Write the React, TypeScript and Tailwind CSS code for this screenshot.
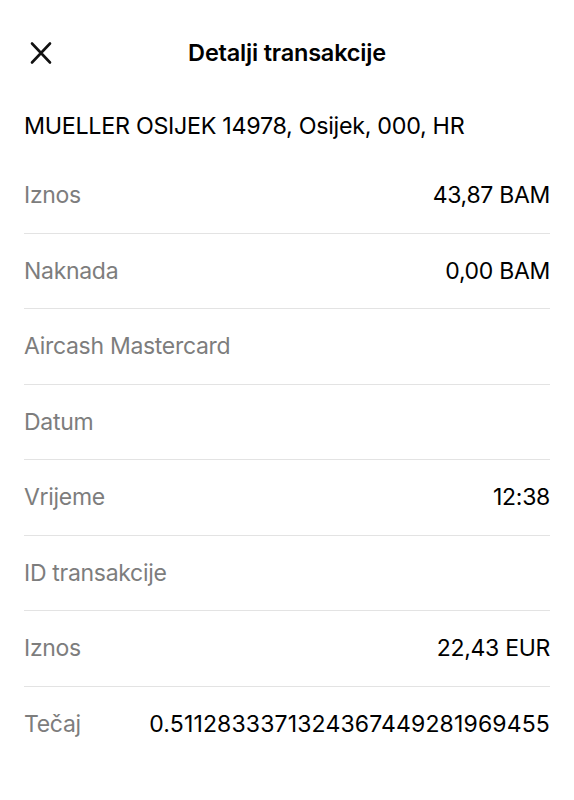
const rows: { label: string; value?: string; wide?: boolean }[] = [
  { label: 'Iznos', value: '43,87 BAM' },
  { label: 'Naknada', value: '0,00 BAM' },
  { label: 'Aircash Mastercard' },
  { label: 'Datum' },
  { label: 'Vrijeme', value: '12:38' },
  { label: 'ID transakcije' },
  { label: 'Iznos', value: '22,43 EUR' },
  { label: 'Tečaj', value: '0.5112833371324367449281969455', wide: true },
];

function CloseIcon() {
  return (
    <svg width="24" height="24" viewBox="0 0 24 24" fill="none" stroke="#111" strokeWidth="2.6" strokeLinecap="round">
      <path d="M3 2.5 L21 21.5 M21 2.5 L3 21.5" />
    </svg>
  );
}

export default function App() {
  return (
    <div className="w-[574px] h-[800px] bg-white text-black" style={{ fontFamily: 'Inter, "Noto Sans", sans-serif' }}>
      <div className="relative h-[106px] flex items-center justify-center">
        <button className="absolute left-[29px] top-[41px]">
          <CloseIcon />
        </button>
        <h1 className="text-[23.5px] font-semibold tracking-[-0.2px]">Detalji transakcije</h1>
      </div>
      <div className="h-[40px] flex items-center px-6 text-[23.3px] tracking-[-0.3px]">
        MUELLER OSIJEK 14978, Osijek, 000, HR
      </div>
      <div className="mt-[12px] px-6">
        {rows.map((row, i) => (
          <div
            key={i}
            className={`h-[75.5px] flex items-center justify-between ${i < rows.length - 1 ? 'border-b border-[#e3e3e3]' : ''}`}
          >
            <span className="text-[23px] text-[#7d7d7d] tracking-[-0.3px]">{row.label}</span>
            {row.value && (
              <span className={row.wide ? 'text-[23px] tracking-[0.15px]' : 'text-[23px] tracking-[-0.3px]'}>
                {row.value}
              </span>
            )}
          </div>
        ))}
      </div>
    </div>
  );
}
